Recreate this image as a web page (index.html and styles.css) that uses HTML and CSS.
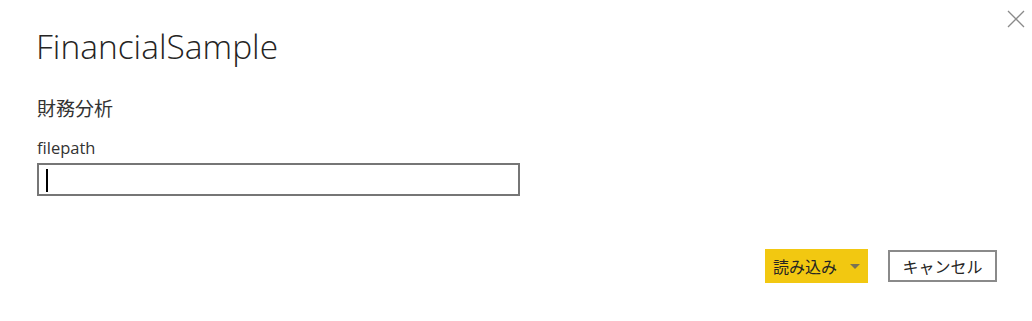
FILE: index.html
```html
<!DOCTYPE html>
<html lang="ja">
<head>
    <meta charset="UTF-8">
    <title>FinancialSample</title>
    <link rel="stylesheet" href="styles.css">
</head>
<body>
<div class="dialog">
    <button class="close" aria-label="閉じる">
        <svg width="18" height="18" viewBox="0 0 18 18">
            <path d="M1 1 L17 17 M17 1 L1 17" stroke="#8a8a8a" stroke-width="1.3" fill="none"/>
        </svg>
    </button>
    <h1 class="title">FinancialSample</h1>
    <div class="subtitle">財務分析</div>
    <label class="field-label">filepath</label>
    <div class="field"><span class="caret"></span></div>
    <div class="actions">
        <button class="btn-load">読み込み<span class="arrow"></span></button>
        <button class="btn-cancel">キャンセル</button>
    </div>
</div>
</body>
</html>
```

FILE: styles.css
```css
*{
    margin: 0;
    padding: 0;
    box-sizing: border-box;
}
body{
    width: 1032px;
    height: 321px;
    background: #fff;
    font-family: "Open Sans", "Noto Sans CJK JP", sans-serif;
    color: #252423;
    overflow: hidden;
}
/*ダイアログ全体*/
.dialog{
    position: relative;
    padding: 23px 0 0 37px;
    display: flex;
    flex-direction: column;
    height: 100%;
}
.dialog > *{
    flex-shrink: 0;
}
.close{
    position: absolute;
    top: 9px;
    right: 6px;
    width: 20px;
    height: 20px;
    border: none;
    background: none;
    display: flex;
    align-items: center;
    justify-content: center;
}
.title{
    font-weight: 300;
    font-size: 33.5px;
    line-height: 46px;
    margin-left: -1px;
}
.subtitle{
    margin-top: 26px;
    font-family: "Noto Sans CJK JP", sans-serif;
    font-size: 19px;
    line-height: 26px;
    color: #333;
}
.field-label{
    margin-top: 16px;
    font-size: 16.5px;
    line-height: 22px;
    color: #333;
}
/*入力欄*/
.field{
    margin-top: 4px;
    width: 483px;
    height: 33px;
    border: 2px solid #767676;
    padding: 4px 0 0 7px;
}
.caret{
    display: block;
    width: 2px;
    height: 23px;
    background: #000;
}
/*ボタン*/
.actions{
    display: flex;
    align-items: center;
    gap: 20px;
    margin-top: 53px;
    margin-left: 728px;
}
.actions button{
    font-family: "Noto Sans CJK JP", sans-serif;
    font-size: 16px;
    color: #252423;
}
.btn-load{
    width: 103px;
    height: 34px;
    background: #f2c811;
    border: none;
    display: flex;
    align-items: center;
    padding-left: 8px;
}
.arrow{
    margin-left: 13px;
    width: 0;
    height: 0;
    border-left: 5px solid transparent;
    border-right: 5px solid transparent;
    border-top: 5px solid #7a7254;
}
.btn-cancel{
    width: 109px;
    height: 32px;
    background: #fff;
    border: 2px solid #8a8a8a;
}
```
